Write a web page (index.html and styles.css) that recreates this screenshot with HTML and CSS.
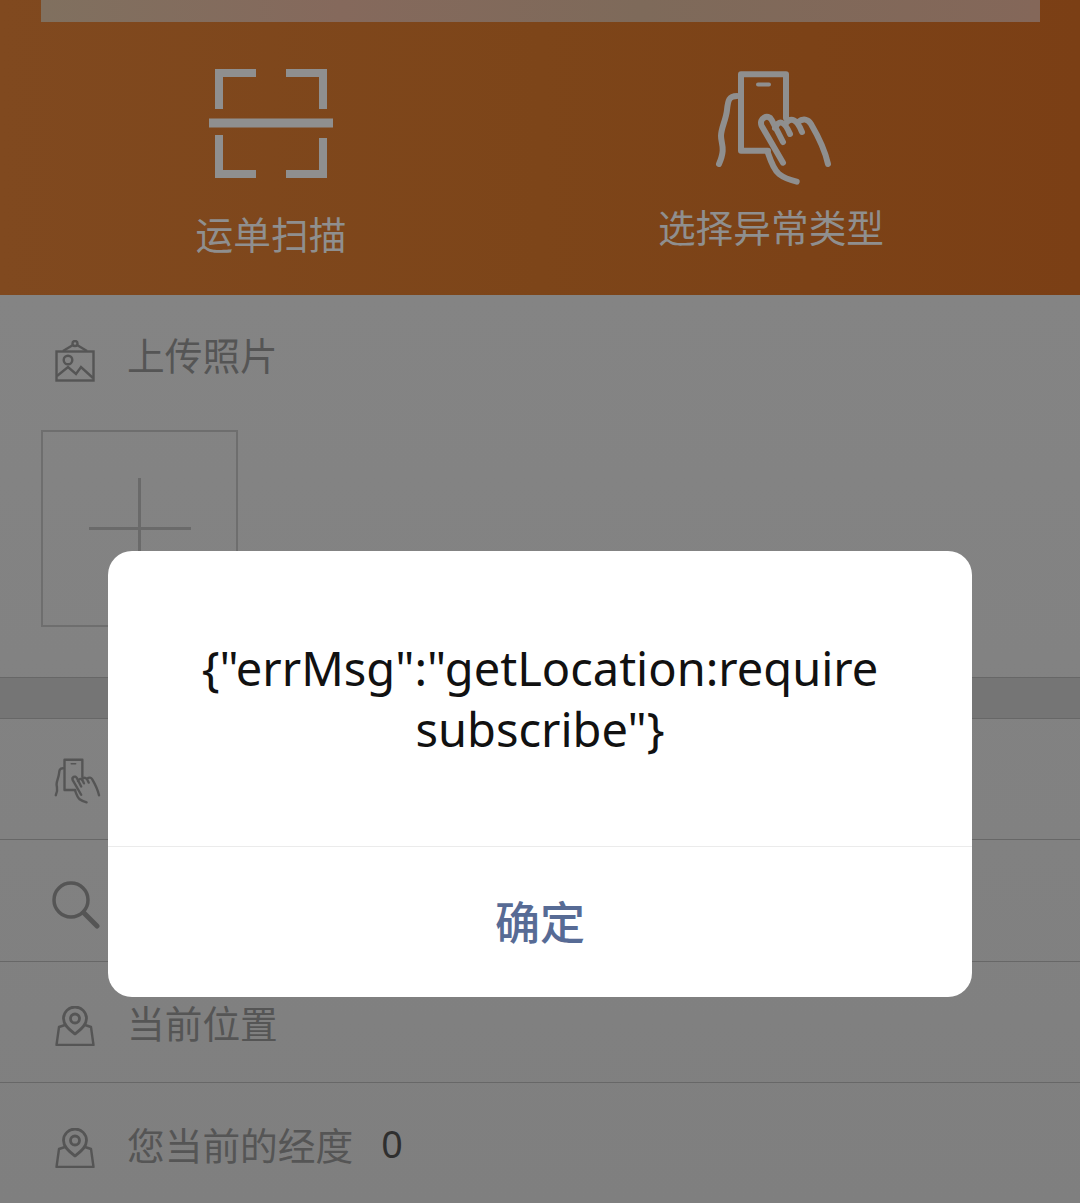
FILE: index.html

```html
<!DOCTYPE html>
<html lang="zh-CN">
<head>
    <meta charset="UTF-8">
    <meta name="viewport" content="width=device-width, initial-scale=1.0">
    <title>运单扫描</title>
    <link rel="stylesheet" href="styles.css">
</head>
<body>

    <!-- Shared icons -->
    <svg class="sprite" aria-hidden="true">
        <symbol id="icon-hand" viewBox="0 0 120 116">
            <g fill="none" stroke="currentColor" stroke-width="6" stroke-linecap="round" stroke-linejoin="round">
                <path d="M71 48V4.3H26V80.7H53"/>
                <path d="M43 14.5H54" stroke-width="4"/>
                <path d="M22 26C14 26 13 30 12 40C11 50 6 58 6 66C6 74 11 78 4 94"/>
                <path d="M68 92.7L46.7 56C43.3 48.3 53.3 43.3 56.7 50L68 72"/>
                <path d="M60 58C64 50 69 50 75 64"/>
                <path d="M71 53C76 47 82 49 87 62"/>
                <path d="M83 52C88 48 93 49 96 54C103 66 110 80 113 94"/>
                <path d="M53 83C56 92 59 100 64 104C69 108 75 110 81.7 111.7"/>
            </g>
        </symbol>
        <symbol id="icon-pin" viewBox="0 0 40 40">
            <g fill="none" stroke="currentColor" stroke-width="2.4" stroke-linejoin="round">
                <path d="M20 28C14 23 8.500 19 8.500 12.500A11.500 11.500 0 0 1 31.500 12.500C31.500 19 26 23 20 28Z" stroke-width="2.800"/>
                <circle cx="20" cy="12.500" r="4.500" stroke-width="2.800"/>
                <path d="M10 19L4 21L1.500 39H38.500L36 21L30 19"/>
            </g>
        </symbol>
    </svg>

    <div class="page">
        <header class="hero">
            <div class="hero-strip"></div>
            <div class="hero-actions">
                <div class="action">
                    <svg class="scan-icon" viewBox="0 0 124 110" fill="none" stroke="currentColor" stroke-width="8">
                        <path d="M10 41V5H47"/>
                        <path d="M77 5H114V41"/>
                        <path d="M0 55H124" stroke-width="9"/>
                        <path d="M10 67V106H47"/>
                        <path d="M77 106H114V70"/>
                    </svg>
                    <span class="action-label">运单扫描</span>
                </div>
                <div class="action action-right">
                    <svg class="hand-icon"><use href="#icon-hand"/></svg>
                    <span class="action-label">选择异常类型</span>
                </div>
            </div>
        </header>

        <section class="upload">
            <div class="upload-title">
                <svg class="row-icon" viewBox="0 0 40 42" fill="none" stroke="currentColor" stroke-width="2.400">
                    <rect x="1.500" y="11.500" width="37" height="29"/>
                    <circle cx="20" cy="3.500" r="2.500"/>
                    <path d="M18 5L8 11M22 5L32 11"/>
                    <circle cx="13" cy="20" r="4.300"/>
                    <path d="M2 36L13 27L21 34L26 27L38 38"/>
                </svg>
                <span>上传照片</span>
            </div>
            <div class="upload-box">
                <span class="plus-h"></span>
                <span class="plus-v"></span>
            </div>
        </section>

        <div class="band"></div>

        <ul class="rows">
            <li class="row">
                <svg class="row-icon hand-small"><use href="#icon-hand"/></svg>
            </li>
            <li class="row">
                <svg class="row-icon search-icon" viewBox="0 0 48 48" fill="none" stroke="currentColor">
                    <circle cx="19" cy="19" r="17" stroke-width="3.500"/>
                    <path d="M32 32L45 45" stroke-width="5" stroke-linecap="round"/>
                </svg>
            </li>
            <li class="row">
                <svg class="row-icon pin-icon"><use href="#icon-pin"/></svg>
                <span>当前位置</span>
            </li>
            <li class="row">
                <svg class="row-icon pin-icon"><use href="#icon-pin"/></svg>
                <span>您当前的经度</span>
                <span class="row-value">0</span>
            </li>
        </ul>
    </div>

    <!-- Alert dialog -->
    <div class="modal">
        <div class="modal-body">{"errMsg":"getLocation:require subscribe"}</div>
        <div class="modal-footer">确定</div>
    </div>

</body>
</html>
```

FILE: styles.css

```css
/* Global Styles */
html, body {
    margin: 0;
    padding: 0;
}

body {
    position: relative;
    width: 1080px;
    height: 1203px;
    overflow: hidden;
    font-family: "Noto Sans", "Noto Sans CJK SC", sans-serif;
    background: #808080;
}

.sprite {
    display: none;
}

.page {
    height: 1203px;
    background: linear-gradient(180deg, #848484 295px, #7f7f7f 100%);
    color: #555555;
}

/* Orange header */
.hero {
    height: 295px;
    background: linear-gradient(90deg, #80491f, #7d4519 50%, #7b3f15);
    padding: 0 40px 0 41px;
    box-sizing: border-box;
}

.hero-strip {
    height: 22px;
    background: linear-gradient(90deg, #80705f, #85695c 30%, #7e6a5a 60%, #846759);
}

.hero-actions {
    display: grid;
    grid-template-columns: 460px 460px;
    column-gap: 40px;
    padding-top: 46px;
}

.action {
    display: flex;
    flex-direction: column;
    align-items: center;
    color: #8f8f8f;
}

.action-right {
    padding-top: 2px;
}

.action-label {
    font-size: 37.700px;
    line-height: 44px;
}

.scan-icon {
    width: 124px;
    height: 110px;
    margin: 0 0 35px;
}

.hand-icon {
    width: 120px;
    height: 116px;
    margin: 0 0 20px 8px;
}

/* Upload block */
.upload {
    height: 382px;
    padding: 40px 0 0 41px;
    box-sizing: border-box;
}

.upload-title {
    display: flex;
    align-items: flex-start;
    gap: 32px;
    height: 44px;
    padding-left: 14px;
    font-size: 37.700px;
    line-height: 44px;
}

.upload-title span {
    margin-top: -1px;
}

.upload-title .row-icon {
    width: 40px;
    height: 42px;
    margin-top: 5px;
}

.upload-box {
    position: relative;
    width: 197px;
    height: 197px;
    margin-top: 51px;
    box-sizing: border-box;
    border: 2px solid #6e6e6e;
}

.plus-h,
.plus-v {
    position: absolute;
    background: #6a6a6a;
}

.plus-h {
    left: 46px;
    top: 95px;
    width: 102px;
    height: 3px;
}

.plus-v {
    left: 95px;
    top: 46px;
    width: 3px;
    height: 102px;
}

.band {
    height: 40px;
    background: #757575;
    border-top: 1px solid #676767;
    border-bottom: 1px solid #676767;
    box-sizing: content-box;
}

/* List rows */
.rows {
    list-style: none;
    margin: 0;
    padding: 0;
}

.row {
    display: flex;
    align-items: center;
    height: 121.300px;
    box-sizing: border-box;
    padding-left: 55px;
    border-bottom: 1px solid #676767;
    font-size: 37.700px;
}

.row:last-child {
    border-bottom: none;
}

.row-icon {
    flex: none;
}

.hand-small {
    width: 48px;
    height: 46px;
    margin: 4px 0 0 -1px;
}

.search-icon {
    width: 48px;
    height: 48px;
    margin: 10px 0 0 -3px;
}

.pin-icon {
    width: 40px;
    height: 40px;
    margin: 9px 32px 0 0;
}

.row-value {
    margin-left: 28px;
    color: #2f2f2f;
}

/* Dialog */
.modal {
    position: absolute;
    left: 108px;
    top: 551px;
    width: 864px;
    height: 446px;
    background: #ffffff;
    border-radius: 24px;
    overflow: hidden;
}

.modal-body {
    display: flex;
    align-items: center;
    justify-content: center;
    height: 296px;
    padding: 0 80px;
    box-sizing: border-box;
    border-bottom: 1px solid #ebebeb;
    text-align: center;
    font-size: 47px;
    line-height: 61px;
    color: #111111;
    word-break: break-word;
}

.modal-footer {
    height: 150px;
    line-height: 152px;
    text-align: center;
    font-size: 45px;
    font-weight: 500;
    color: #576b95;
}
```
